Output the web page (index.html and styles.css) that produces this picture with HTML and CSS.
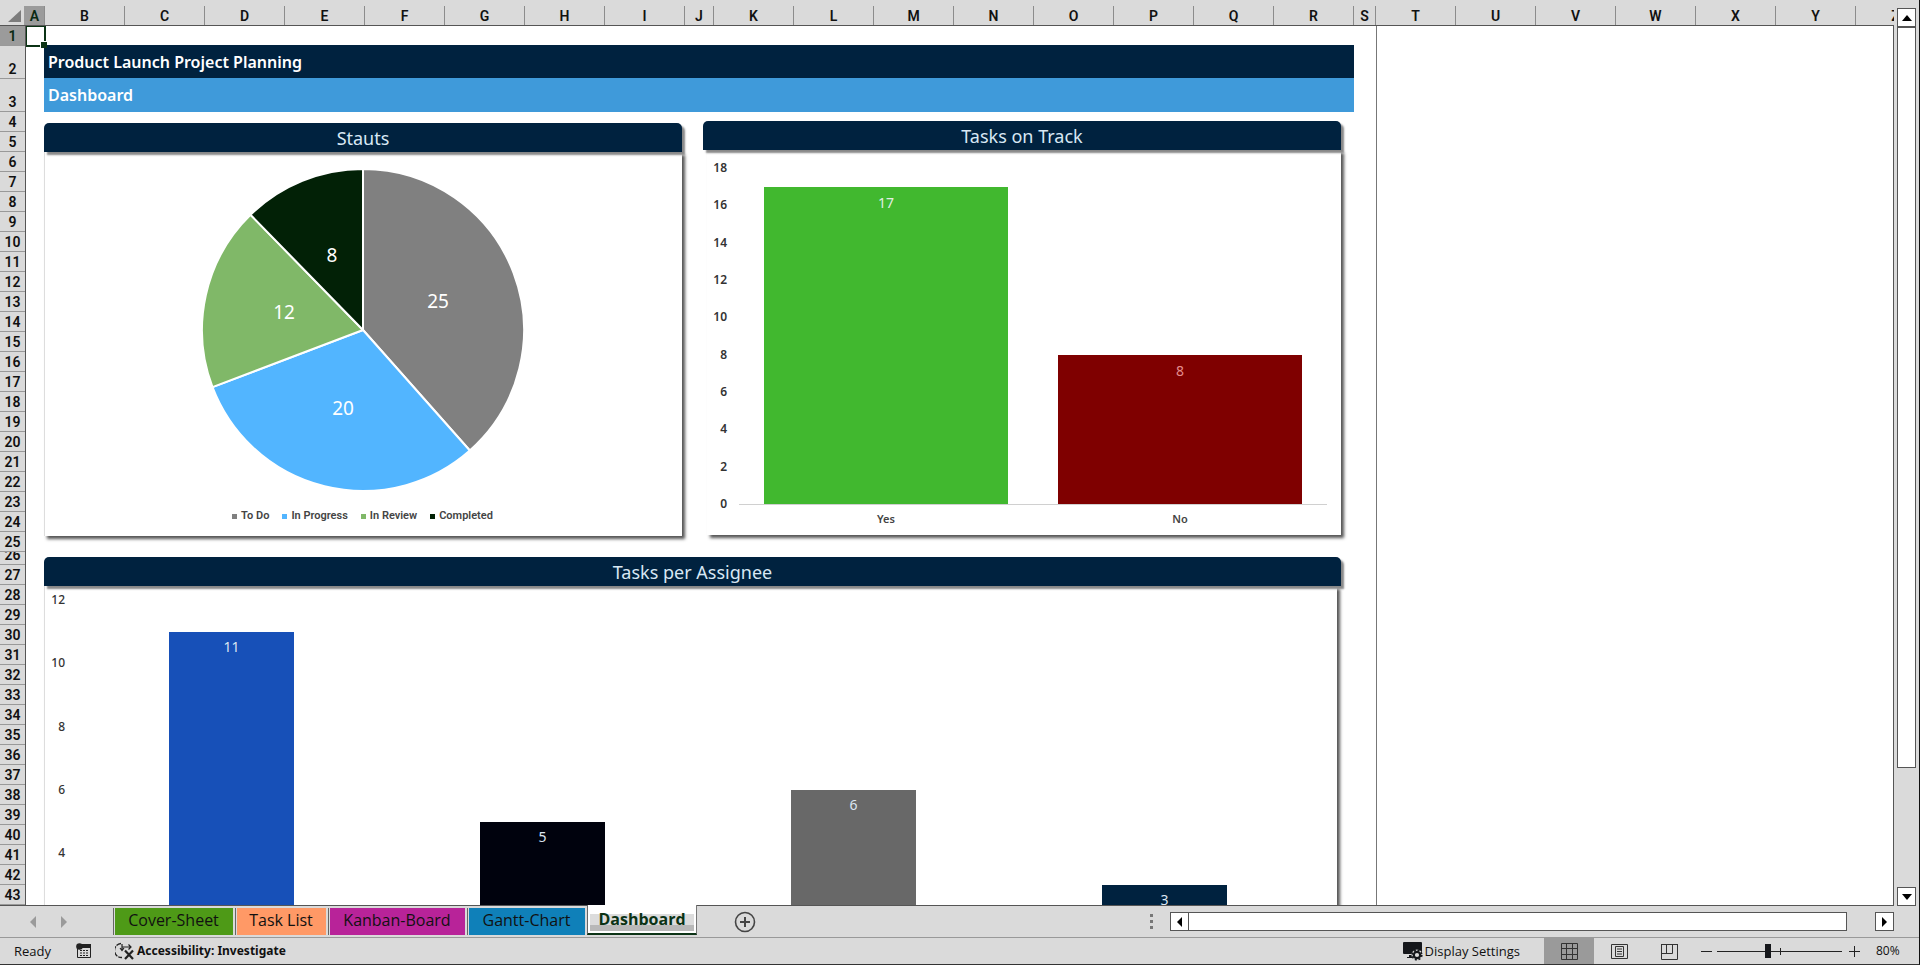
FILE: index.html
```
<!DOCTYPE html>
<html lang="en">
<head>
<meta charset="utf-8">
<title>Product Launch Project Planning - Dashboard</title>
<link rel="stylesheet" href="styles.css">
</head>
<body>
<div class="app">
  <div class="workbook">
    <div class="grid-area">
      <div class="columns">
        <div class="corner"><svg width="13" height="12" viewBox="0 0 13 12"><path d="M13 0V12H0Z" fill="#7c7c7c"/></svg></div>
        <div class="col narrow-a selected">A</div><div class="col">B</div><div class="col">C</div><div class="col">D</div><div class="col">E</div><div class="col">F</div><div class="col">G</div><div class="col">H</div><div class="col">I</div><div class="col narrow-j">J</div><div class="col">K</div><div class="col">L</div><div class="col">M</div><div class="col">N</div><div class="col">O</div><div class="col">P</div><div class="col">Q</div><div class="col">R</div><div class="col narrow-s">S</div><div class="col">T</div><div class="col">U</div><div class="col">V</div><div class="col">W</div><div class="col">X</div><div class="col">Y</div><div class="col">Z</div>
      </div>
      <div class="sheet-body">
        <div class="rows">
          <div class="row selected">1</div><div class="row tall">2</div><div class="row tall">3</div><div class="row">4</div><div class="row">5</div><div class="row">6</div><div class="row">7</div><div class="row">8</div><div class="row">9</div><div class="row">10</div><div class="row">11</div><div class="row">12</div><div class="row">13</div><div class="row">14</div><div class="row">15</div><div class="row">16</div><div class="row">17</div><div class="row">18</div><div class="row">19</div><div class="row">20</div><div class="row">21</div><div class="row">22</div><div class="row">23</div><div class="row">24</div><div class="row">25</div><div class="row short">26</div><div class="row">27</div><div class="row">28</div><div class="row">29</div><div class="row">30</div><div class="row">31</div><div class="row">32</div><div class="row">33</div><div class="row">34</div><div class="row">35</div><div class="row">36</div><div class="row">37</div><div class="row">38</div><div class="row">39</div><div class="row">40</div><div class="row">41</div><div class="row">42</div><div class="row">43</div>
        </div>
        <main class="sheet">
          <div class="active-cell"></div>
          <h1 class="banner banner-title">Product Launch Project Planning</h1>
          <h2 class="banner banner-sub">Dashboard</h2>
          <div class="charts">
            <section class="chart status-chart">
              <h3 class="chart-title">Stauts</h3>
              <div class="panel pie-panel">
                <svg class="pie" width="322" height="322" viewBox="-161 -161 322 322" role="img" aria-label="Status pie chart">
                  <g stroke="#fff" stroke-width="2" stroke-linejoin="round">
                    <path fill="#808080" d="M0 0V-161A161 161 0 0 1 106.8 120.5Z"/>
                    <path fill="#52b5ff" d="M0 0L106.8 120.5A161 161 0 0 1 -150.5 57.1Z"/>
                    <path fill="#80b868" d="M0 0L-150.5 57.1A161 161 0 0 1 -112.5 -115.2Z"/>
                    <path fill="#022106" d="M0 0L-112.5 -115.2A161 161 0 0 1 0 -161Z"/>
                  </g>
                  <g class="pie-value" text-anchor="middle">
                    <text x="75" y="-22">25</text>
                    <text x="-20" y="85">20</text>
                    <text x="-79" y="-11">12</text>
                    <text x="-31" y="-68">8</text>
                  </g>
                </svg>
                <ul class="legend">
                  <li class="todo">To Do</li><li class="progress">In Progress</li><li class="review">In Review</li><li class="done">Completed</li>
                </ul>
              </div>
            </section>
            <section class="chart track-chart">
              <h3 class="chart-title">Tasks on Track</h3>
              <div class="panel track-panel">
                <div class="axis track-axis"><span>18</span><span>16</span><span>14</span><span>12</span><span>10</span><span>8</span><span>6</span><span>4</span><span>2</span><span>0</span></div>
                <div class="plot track-plot">
                  <div class="bar yes" style="height:94.44%">17</div>
                  <div class="bar no" style="height:44.44%">8</div>
                </div>
                <div class="categories"><span>Yes</span><span>No</span></div>
              </div>
            </section>
            <section class="chart assignee-chart">
              <h3 class="chart-title">Tasks per Assignee</h3>
              <div class="panel assignee-panel">
                <div class="axis assignee-axis"><span>12</span><span>10</span><span>8</span><span>6</span><span>4</span><span>2</span><span>0</span></div>
                <div class="plot assignee-plot">
                  <div class="bar blue" style="height:91.67%">11</div>
                  <div class="bar black" style="height:41.67%">5</div>
                  <div class="bar gray" style="height:50%">6</div>
                  <div class="bar navy" style="height:25%">3</div>
                </div>
              </div>
            </section>
          </div>
        </main>
      </div>
    </div>
    <div class="vscroll">
      <button class="scroll-btn" aria-label="Scroll up"><svg width="10" height="6"><path d="M5 0L10 6H0Z"/></svg></button>
      <div class="vthumb"></div>
      <div class="vspace"></div>
      <button class="scroll-btn" aria-label="Scroll down"><svg width="10" height="6"><path d="M0 0H10L5 6Z"/></svg></button>
    </div>
  </div>
  <nav class="tabbar">
    <div class="tab-arrows">
      <button aria-label="Previous sheet"><svg width="6" height="12"><path d="M6 0V12L0 6Z" fill="#9a9a9a"/></svg></button>
      <button aria-label="Next sheet"><svg width="6" height="12"><path d="M0 0V12L6 6Z" fill="#9a9a9a"/></svg></button>
    </div>
    <button class="tab cover">Cover-Sheet</button>
    <button class="tab tasks">Task List</button>
    <button class="tab kanban">Kanban-Board</button>
    <button class="tab gantt">Gantt-Chart</button>
    <button class="tab active">Dashboard</button>
    <button class="add" aria-label="New sheet"><svg width="22" height="22" viewBox="0 0 22 22" fill="none" stroke="#444" stroke-width="2"><circle cx="11" cy="11" r="9.5" stroke-width="1.6"/><path d="M11 6V16M6 11H16"/></svg></button>
    <div class="hscroll">
      <svg class="grip" width="3" height="15" fill="#777"><path d="M0 0h3v3H0zM0 6h3v3H0zM0 12h3v3H0z"/></svg>
      <button class="scroll-btn" aria-label="Scroll left"><svg width="5" height="10"><path d="M5 0V10L0 5Z"/></svg></button>
      <div class="hthumb"></div>
      <div class="hspace"></div>
      <button class="scroll-btn" aria-label="Scroll right"><svg width="5" height="10"><path d="M0 0V10L5 5Z"/></svg></button>
    </div>
  </nav>
  <footer class="statusbar">
    <span class="ready">Ready</span>
    <button class="macro" aria-label="Record macro"><svg width="16" height="16" viewBox="0 0 16 16"><path d="M1.500 4V14.500H14.500V2" fill="none" stroke="#222"/><path d="M5 1H15V5H5Z" fill="#222"/><circle cx="3.500" cy="3.500" r="3.300" fill="#222"/><path d="M4 7.500H13M4 10H13M4 12.500H13" stroke="#222" stroke-dasharray="2 1"/></svg></button>
    <button class="access"><svg width="20" height="18" viewBox="0 0 20 18" fill="none" stroke="#222"><path d="M6 1.500A7 7 0 0 0 7 15.500" stroke-width="1.300" stroke-dasharray="5 1"/><path d="M7 2V8M5 6L7 8.500L9 6M7 5H16M13.500 2.500L16 5L13.500 7.500" stroke-width="1.200"/><path d="M10 8.500L18 17M18 8.500L10 17" stroke-width="2.200"/></svg>Accessibility: Investigate</button>
    <button class="display"><svg width="20" height="19" viewBox="0 0 20 19"><path d="M1 0H18Q19 0 19 1V12H1Q0 12 0 11V1Q0 0 1 0M6 13H9V16H4V15H6Z" fill="#15171b"/><circle cx="14" cy="13" r="5.500" fill="#dadada"/><circle cx="14" cy="13" r="3.200" fill="none" stroke="#15171b" stroke-width="2.200"/><circle cx="14" cy="13" r="4.800" fill="none" stroke="#15171b" stroke-width="1.600" stroke-dasharray="2 1.770"/></svg>Display Settings</button>
    <div class="views">
      <button class="view current" aria-label="Normal view"><svg width="17" height="17" fill="none" stroke="#333"><path d="M.5.5H16.500V16.500H.5ZM5.500 0V17M11.500 0V17M0 5.500H17M0 11.500H17"/></svg></button>
      <button class="view" aria-label="Page layout"><svg width="17" height="17" fill="none" stroke="#333"><path d="M.5 1.500H16.500V15.500H.5ZM4.500 3.500H12.500V13.500H4.500ZM6 6H11M6 8.500H11M6 11H11"/></svg></button>
      <button class="view" aria-label="Page break preview"><svg width="17" height="17" fill="none" stroke="#333"><path d="M.5 1V16.500H16.500V1M.5 1.500H16.500M5.500 1V10.500M11.500 1V10.500M.5 10.500H11.500"/></svg></button>
    </div>
    <button class="zoom-btn" aria-label="Zoom out"><svg width="11" height="11" stroke="#222"><path d="M0 5.500H11"/></svg></button>
    <input class="zoom" type="range" min="10" max="400" value="166" aria-label="Zoom">
    <button class="zoom-btn" aria-label="Zoom in"><svg width="11" height="11" stroke="#222"><path d="M0 5.500H11M5.500 0V11"/></svg></button>
    <span class="percent">80%</span>
  </footer>
</div>
</body>
</html>
```
FILE: styles.css
```
* { box-sizing: border-box; }
body { margin: 0; background: #dadada; color: #111; font-family: Roboto, "Open Sans", sans-serif; }
h1, h2, h3, ul { margin: 0; padding: 0; font-weight: 400; }
button { margin: 0; padding: 0; border: 0; background: none; color: inherit; font: inherit; display: flex; align-items: center; justify-content: center; }

.app { height: 100vh; display: flex; flex-direction: column; overflow: hidden; border-right: 1px solid #111; border-bottom: 1px solid #333; }
.workbook { flex: 1; min-height: 0; display: flex; }
.grid-area { flex: 1; min-width: 0; display: flex; flex-direction: column; overflow: hidden; }

/* Column and row headings */
.columns { height: 26px; padding-top: 6px; display: flex; flex: none; overflow: hidden; border-bottom: 1px solid #555; }
.corner { flex: none; width: 25px; display: flex; justify-content: flex-end; align-items: flex-end; padding: 0 3px 3px 0; border-right: 1px solid #9c9c9c; }
.col { flex: none; width: 80px; border-right: 1px solid #8c8c8c; text-align: center; font: 600 14px/21px "Liberation Sans Narrow", Roboto, sans-serif; }
.narrow-a { width: 20px; }
.narrow-j { width: 29px; }
.narrow-s { width: 22px; }
.selected { background: #9b9b9b; color: #0a2a12; }
.sheet-body { flex: 1; min-height: 0; display: flex; border-right: 1px solid #555; border-bottom: 1px solid #555; background: #fff; }
.rows { flex: none; width: 26px; overflow: hidden; background: #dadada; border-right: 1px solid #555; }
.row { height: 20px; display: flex; align-items: flex-end; justify-content: center; overflow: hidden; border-bottom: 1px solid #999; font: 600 14px/18px "Liberation Sans Narrow", Roboto, sans-serif; }
.row.tall { height: 33px; }
.row.short { height: 13px; }

/* Sheet */
.sheet { position: relative; flex: none; width: 1351px; padding: 19px 22px 0 18px; overflow: hidden; border-right: 1px solid #777; }
.active-cell { position: absolute; left: -1px; top: -1px; width: 21px; height: 22px; border: 2px solid #0b3315; }
.active-cell::after { content: ""; position: absolute; right: -3px; bottom: -3px; width: 6px; height: 6px; background: #0b3315; border: solid #fff; border-width: 1px 0 0 1px; }
.banner { padding-left: 4px; color: #fff; font-family: "Noto Sans", sans-serif; font-weight: 600; }
.banner-title { height: 33px; background: #00223f; font-size: 16px; line-height: 34px; }
.banner-sub { background: #3f9ada; font-size: 16px; line-height: 34px; }
.charts { display: grid; grid-template-columns: 638px 638px; justify-content: space-between; align-items: start; padding: 9px 13px 0 0; row-gap: 21px; }
.chart-title { position: relative; height: 29px; background: #00223f; color: #d8e8f4; text-align: center; font: 400 18px/31px "Noto Sans", sans-serif; border-radius: 5px 5px 0 0; box-shadow: 3px 3px 2px #888; }
.panel { background: #fff; box-shadow: 3px 3px 3px #555; }
.status-chart { padding-top: 2px; }
.pie-panel { height: 384px; padding: 17px 2px 0 0; border-left: 1px solid #ddd; display: flex; flex-direction: column; align-items: center; }
.pie-value { fill: #fff; font: 400 19px "Noto Sans", sans-serif; }
.legend { list-style: none; display: flex; gap: 13px; margin-top: 18px; font: 600 11px/14px Roboto, sans-serif; color: #444; }
.legend li { display: flex; align-items: center; gap: 4px; }
.legend li::before { content: ""; width: 5px; height: 5px; background: #808080; }
.legend .progress::before { background: #52b5ff; }
.legend .review::before { background: #80b868; }
.legend .done::before { background: #022106; }

/* Bar charts */
.axis { display: flex; flex-direction: column; justify-content: space-between; text-align: right; color: #333; }
.axis span { line-height: 14px; }
.plot { display: grid; align-items: end; justify-items: center; }
.bar { color: #e4eee4; text-align: center; font-family: "Noto Sans", sans-serif; font-size: 14px; }
.track-panel { height: 385px; margin-left: 4px; padding: 11px 14px 0 0; display: grid; grid-template-columns: 20px 1fr; grid-template-rows: 350px 18px; column-gap: 12px; align-content: start; }
.track-axis { font: 600 12px "Noto Sans", sans-serif; }
.track-plot { grid-template-columns: 1fr 1fr; margin: 7px 0 6px; border-bottom: 1px solid #d0d0d0; }
.track-plot .bar { width: 83.33%; line-height: 32px; }
.yes { background: #41b82f; }
.no { background: #7f0000; color: #e58e8e; }
.categories { grid-column: 2; display: grid; grid-template-columns: 1fr 1fr; text-align: center; font: 600 11px/16px "Noto Sans", sans-serif; color: #444; }
.assignee-chart { grid-column: 1 / 3; }
.assignee-panel { margin-right: 4px; padding: 7px 17px 30px 0; height: 440px; border-left: 1px solid #ddd; display: grid; grid-template-columns: 20px 1fr; grid-template-rows: 394px; column-gap: 11px; }
.assignee-axis { font: 500 12px "Noto Sans", sans-serif; }
.assignee-plot { grid-template-columns: repeat(4, 1fr); margin: 7px 0; }
.assignee-plot .bar { width: 40%; line-height: 30px; font-size: 14px; color: #dce6f2; }
.blue { background: #1750b8; }
.black { background: #00020d; }
.gray { background: #686868; }
.navy { background: #00223f; }

/* Scroll bars */
.vscroll { flex: none; width: 25px; padding: 8px 3px 0; display: flex; flex-direction: column; }
.scroll-btn { flex: none; width: 19px; height: 19px; background: #fff; border: 1px solid #555; }
.vthumb { flex: 741; background: #fff; border: 1px solid #555; }
.vspace { flex: 119; }
.tabbar { flex: none; height: 32px; display: flex; align-items: flex-start; border-bottom: 1px solid #999; font: 400 16px/24px "Open Sans", sans-serif; }
.tab-arrows { width: 113px; padding: 10px 0 0 30px; display: flex; gap: 25px; }
.tab { height: 27px; margin: 2px 2px 0 0; padding: 0 10px 4px; border-left: 1px solid #666; box-shadow: inset 1px 0 #dadada; }
.cover { width: 120px; background: #4e9a17; }
.tasks { width: 91px; background: #ff9966; }
.kanban { width: 137px; background: #b82399; }
.gantt { width: 118px; background: #0f80b9; }
.tab.active { width: 110px; height: 30px; margin: -1px 0 0; padding: 0 0 1px; background: linear-gradient(#fff 0 9px, #dcdcdc 9px 20px, #b8b8b8 20px 26px, #fff 26px); border-right: 1px solid #777; border-bottom: 2px solid #0b3315; color: #0b3315; font-weight: 700; box-shadow: inset 2px 0 #fff, inset -2px 0 #fff; }
.add { margin: 5px 0 0 37px; }
.hscroll { flex: 1; margin: 6px 25px 0 0; display: flex; }
.grip { margin: 2px 17px 0 auto; }
.hthumb { flex: none; width: 659px; height: 19px; margin-left: -1px; background: #fff; border: 1px solid #555; }
.hspace { flex: none; width: 28px; }

/* Status bar */
.statusbar { flex: none; height: 26px; display: flex; align-items: center; font: 400 13px/20px "Open Sans", sans-serif; }
.ready { width: 76px; padding-left: 14px; }
.access { gap: 2px; margin-left: 23px; font-family: "Noto Sans", sans-serif; font-weight: 700; font-size: 12px; }
.display { margin-left: auto; gap: 2px; }
.views { display: flex; margin-left: 24px; align-self: stretch; }
.view { width: 50px; }
.current { background: #9a9a9a; }
.zoom-btn { margin-left: 7px; }
.zoom { appearance: none; width: 125px; height: 14px; margin: 0 0 0 5px; background: linear-gradient(#222, #222) 63px 50% / 1px 7px no-repeat, linear-gradient(#222, #222) 0 50% / 100% 1px no-repeat; }
.zoom::-webkit-slider-thumb { appearance: none; width: 6px; height: 14px; background: #15171b; border: 0; border-radius: 0; }
.percent { width: 25px; margin: 0 18px 0 16px; font-size: 12px; }
```
